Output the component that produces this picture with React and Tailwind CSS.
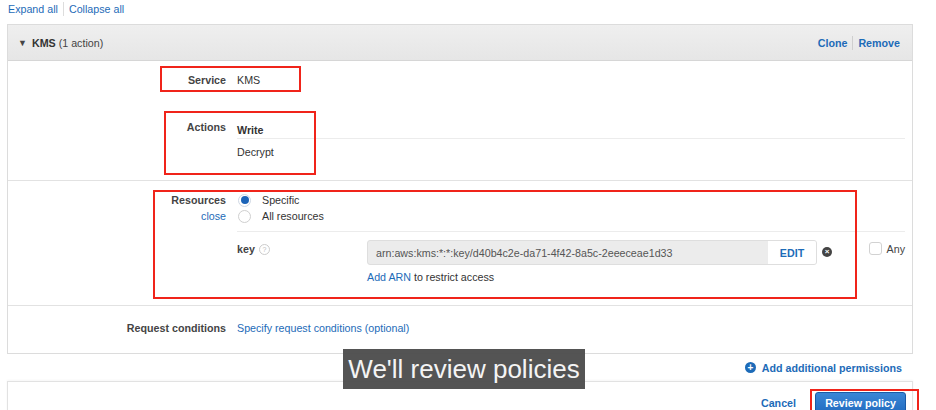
// IAM visual editor: KMS permission block with review annotations.

const link = "text-[#1d6bb8]";

function Radio({ checked }) {
  return checked ? (
    <span className="flex h-[13px] w-[13px] items-center justify-center rounded-full border border-[#d0d8e4] bg-white">
      <span className="h-[8px] w-[8px] rounded-full bg-[#1c64b8]" />
    </span>
  ) : (
    <span className="h-[13px] w-[13px] rounded-full border border-[#cfcfcf] bg-white" />
  );
}

function Label({ children, className = "" }) {
  return (
    <div className={`w-[218px] shrink-0 text-right font-bold text-[#444] ${className}`}>{children}</div>
  );
}

export default function App() {
  return (
    <div className="relative h-[410px] w-[936px] overflow-hidden bg-white font-['Liberation_Sans',Arial,sans-serif] text-[10.7px] leading-[14px] text-[#333]">
      <div className="flex h-[24px] items-start pl-[8px] pt-[2px]">
        <span className={link}>Expand all</span>
        <span className="mx-[5px] h-[14px] w-px bg-[#ddd]" />
        <span className={link}>Collapse all</span>
      </div>

      <div className="ml-[7px] w-[906px] border border-[#dcdcdc]">
        <div className="flex h-[36px] items-center border-b border-[#d6d6d6] bg-gradient-to-b from-[#efefef] to-[#e6e6e6] pl-[10px] pr-[12px]">
          <span className="mr-[5px] text-[9px] text-[#444]">▼</span>
          <span className="font-bold text-[#333]">KMS</span>
          <span className="ml-[3px] text-[#444]">(1 action)</span>
          <div className="ml-auto flex items-center font-bold">
            <span className={link}>Clone</span>
            <span className="mx-[5px] h-[14px] w-px bg-[#cfcfcf]" />
            <span className={link}>Remove</span>
          </div>
        </div>

        {/* service + actions */}
        <div className="border-b border-[#e2e2e2] pb-[21px] pt-[12px]">
          <div className="flex">
            <Label>Service</Label>
            <div className="ml-[11px]">KMS</div>
          </div>
          <div className="mt-[33px] flex">
            <Label>Actions</Label>
            <div className="ml-[11px] flex-1 pr-[7px]">
              <div className="border-b border-[#ececec] pb-[1px] pt-[3px] font-bold text-[#333]">Write</div>
              <div className="pt-[6px]">Decrypt</div>
            </div>
          </div>
        </div>

        {/* resources */}
        <div className="border-b border-[#e2e2e2] pb-[20px] pt-[11px] leading-[16px]">
          <div className="flex">
            <div className="w-[218px] shrink-0 text-right">
              <div className="font-bold text-[#444]">Resources</div>
              <div className={link}>close</div>
            </div>
            <div className="ml-[11px] flex-1 pr-[7px]">
              <div className="pl-[1px]">
                <div className="flex items-center">
                  <Radio checked />
                  <span className="ml-[11px]">Specific</span>
                </div>
                <div className="flex items-center">
                  <Radio />
                  <span className="ml-[11px]">All resources</span>
                </div>
              </div>
              <div className="mt-[7px] border-t border-[#ececec] pt-[8px]">
                <div className="flex items-start">
                  <div className="flex w-[130px] items-center pt-[1px]">
                    <span className="font-bold text-[#444]">key</span>
                    <span className="ml-[4px] flex h-[11px] w-[11px] items-center justify-center rounded-full border border-[#ccc] text-[7px] leading-none text-[#bbb]">?</span>
                  </div>
                  <div className="flex h-[25px] w-[450px] items-center overflow-hidden rounded-[3px] border border-[#dedede] bg-[#ececec]">
                    <span className="pl-[8px] text-[#555]">arn:aws:kms:*:*:key/d40b4c2e-da71-4f42-8a5c-2eeeceae1d33</span>
                    <span className="ml-auto flex h-full w-[48px] items-center justify-center bg-white font-bold text-[#1d6bb8]">EDIT</span>
                  </div>
                  <span className="ml-[5px] mt-[7px] flex h-[10px] w-[10px] items-center justify-center rounded-full bg-[#444] text-[8px] font-bold leading-none text-white">×</span>
                  <div className="ml-auto flex items-start pt-[1px]">
                    <span className="mt-[1px] h-[13px] w-[13px] rounded-[3px] border border-[#d2d2d2] bg-white" />
                    <span className="ml-[5px] text-[#444]">Any</span>
                  </div>
                </div>
                <div className="mt-[4px] pl-[130px]">
                  <span className={link}>Add ARN</span> to restrict access
                </div>
              </div>
            </div>
          </div>
        </div>

        {/* conditions */}
        <div className="flex pb-[18px] pt-[15px]">
          <Label>Request conditions</Label>
          <div className={`ml-[11px] ${link}`}>Specify request conditions (optional)</div>
        </div>
      </div>

      <div className="flex h-[27px] w-[902px] items-center justify-end font-bold text-[#1d6bb8]">
        <span className="mr-[6px] flex h-[11px] w-[11px] items-center justify-center rounded-full bg-[#1d6bb8] text-[10px] leading-none text-white">+</span>
        Add additional permissions
      </div>

      <div className="ml-[7px] w-[906px] border border-b-0 border-[#e2e2e2] shadow-[0_-1px_2px_rgba(0,0,0,0.04)]">
        <div className="flex items-center justify-end pr-[6px] pt-[10px]">
          <span className="mr-[19px] font-bold text-[#1d6bb8]">Cancel</span>
          <span className="flex h-[22px] w-[91px] items-center justify-center rounded-[3px] border border-[#1a5aa6] bg-gradient-to-b from-[#3a86d6] to-[#226cc0] font-bold text-white">
            Review policy
          </span>
        </div>
      </div>

      {/* annotations */}
      <div className="absolute left-[160px] top-[66px] h-[26px] w-[141px] border-2 border-[#f0241a]" />
      <div className="absolute left-[164px] top-[111px] h-[64px] w-[152px] border-2 border-[#f0241a]" />
      <div className="absolute left-[153px] top-[190px] h-[109px] w-[704px] border-2 border-[#f0241a]" />
      <div className="absolute left-[810px] top-[389px] h-[30px] w-[109px] border-2 border-[#f0241a]" />

      <div className="absolute left-[343px] top-[349px] flex h-[40px] w-[242px] items-center justify-center bg-[#4b4b4b]/95 text-[26px] leading-none text-[#f4f4f4]">
        We'll review policies
      </div>
    </div>
  );
}
